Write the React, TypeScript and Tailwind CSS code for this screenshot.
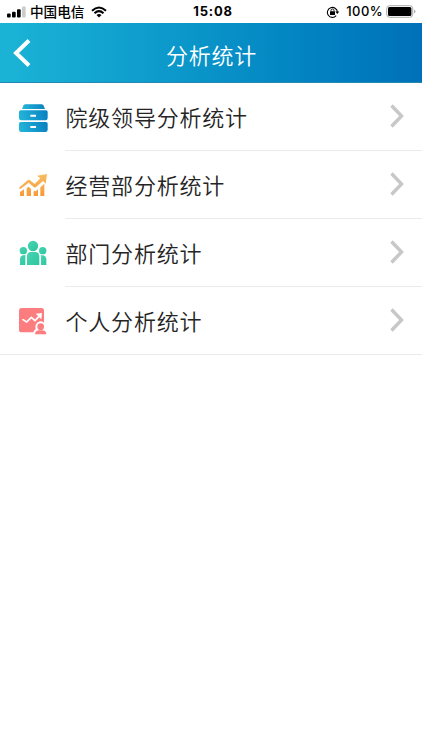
import type { ReactNode } from 'react';

const font = "font-['Noto_Sans_CJK_SC',sans-serif]";

function DrawerIcon() {
  return (
    <svg viewBox="0 -3 135 135" className="h-[45px] w-[45px]">
      <defs>
        <linearGradient id="drawer" x1="0" y1="0.1" x2="1" y2="0">
          <stop offset="0" stopColor="#22b3d8" />
          <stop offset="1" stopColor="#087fc1" />
        </linearGradient>
      </defs>
      <path d="M46 28H95Q98 28 100 31L105 42H36L41 31Q43 28 46 28Z" fill="url(#drawer)" />
      <path fillRule="evenodd" d="M32 46H108Q113 46 113 51V69Q113 76 106 76H34Q27 76 27 69V51Q27 46 32 46ZM61 59V65H78V59Z" fill="url(#drawer)" />
      <path fillRule="evenodd" d="M32 81H108Q113 81 113 86V104Q113 111 106 111H34Q27 111 27 104V86Q27 81 32 81ZM61 93V99H78V93Z" fill="url(#drawer)" />
    </svg>
  );
}

function GrowthIcon() {
  return (
    <svg viewBox="0 0 135 135" className="h-[45px] w-[45px]">
      <defs>
        <linearGradient id="growth" gradientUnits="userSpaceOnUse" x1="0" y1="35" x2="0" y2="103">
          <stop offset="0" stopColor="#f8bd62" />
          <stop offset="1" stopColor="#f79a35" />
        </linearGradient>
      </defs>
      <g fill="url(#growth)">
        <path d="M30 90L42 82V102H30ZM50 78L56 74L63 81V102H50ZM71 86L77 88L84 82V102H71ZM91 76L103 65V102H91Z" />
        <path d="M81 41L111 36L107 65L99 57L78 75Q75 78 71 75L56 62L32 80Q28 81 27 77L54 54Q57 52 60 55L74 66L91 49Z" />
      </g>
    </svg>
  );
}

function TeamIcon() {
  return (
    <svg viewBox="0 0 135 135" className="h-[45px] w-[45px]">
      <defs>
        <linearGradient id="team" x1="0" y1="0" x2="1" y2="1">
          <stop offset="0" stopColor="#49d4b1" />
          <stop offset="1" stopColor="#2cc6a0" />
        </linearGradient>
      </defs>
      <g fill="url(#team)">
        <circle cx="69" cy="48" r="15.5" />
        <path d="M60 66H78Q88 68 88 80V105H51V80Q51 68 60 66Z" />
        <circle cx="40" cy="62" r="11" />
        <path d="M38 76H47L46 81V105H30V86Q30 78 38 76Z" />
        <circle cx="98" cy="62" r="11" />
        <path d="M92 76H100Q108 78 109 86V105H93V81Z" />
      </g>
    </svg>
  );
}

function PersonalIcon() {
  return (
    <svg viewBox="0 0 135 135" className="h-[45px] w-[45px]">
      <rect x="27" y="30" width="75" height="73" rx="8" fill="#fb7d80" />
      <path d="M39 65L50 72L64 58L75 68L90 52" fill="none" stroke="white" strokeWidth="5" strokeLinecap="round" strokeLinejoin="round" />
      <path d="M77 47L96 45L94 64Z" fill="white" />
      <circle cx="92" cy="86" r="16" fill="white" />
      <path d="M70 112V106Q70 92 84 92H100Q115 93 115 106V112Z" fill="white" />
      <circle cx="92" cy="86" r="10" fill="#fb7d80" />
      <path d="M86 97H98Q109 99 109 109H75Q75 99 86 97Z" fill="#fb7d80" />
    </svg>
  );
}

function Row({ icon, label, last = false }: { icon: ReactNode; label: string; last?: boolean }) {
  return (
    <li className={`flex h-[68px] pl-[10px] ${last ? 'border-b border-[#ebebeb]' : ''}`}>
      <div className="w-[55px] shrink-0 pt-[11px]">{icon}</div>
      <div className={`flex flex-1 items-center justify-between pr-[18px] pb-[2px] ${last ? '' : 'border-b border-[#ebebeb]'}`}>
        <span className="ml-[0.5px] text-[22px] leading-[32px] font-[350] tracking-[0.8px] text-[#252525]">{label}</span>
        <svg viewBox="0 0 14 24" className="h-6 w-[14px]">
          <path d="M1.5 1.5L11.5 12L1.5 22.5" fill="none" stroke="#c8c8c8" strokeWidth="3.5" />
        </svg>
      </div>
    </li>
  );
}

export default function App() {
  return (
    <main className={`h-[750px] w-[422px] overflow-hidden bg-white ${font}`}>
      <div className="flex h-[23px] items-center pr-[6px] pl-[7px] text-black">
        <div className="flex w-[156px] items-center">
          <svg viewBox="0 0 19 12" className="h-3 w-[19px]">
            <rect x="0" y="7.5" width="3.7" height="4" rx="1" />
            <rect x="5" y="5.8" width="3.7" height="5.7" rx="1" />
            <rect x="10" y="3.2" width="3.7" height="8.3" rx="1" />
            <rect x="15" y="0.5" width="3.7" height="11" rx="1" fill="#ccc" />
          </svg>
          <span className="ml-[4px] text-[13.6px] leading-[23px] font-medium">中国电信</span>
          <svg viewBox="0 0 16 12" className="ml-[7px] h-3 w-4" fill="none" stroke="black" strokeWidth="2.1">
            <path d="M1 4.7Q8 -1.7 15 4.7M3.5 7.2Q8 3.2 12.5 7.2" />
            <path d="M5.5 9Q8 6.8 10.5 9L8 11.5Z" fill="black" stroke="none" />
          </svg>
        </div>
        <span className="w-[100px] pt-[1px] text-center font-['Inter',sans-serif] text-[13px] font-bold tracking-[0.8px]">15:08</span>
        <div className="flex flex-1 items-center justify-end">
          <svg viewBox="0 0 14 12" className="h-3 w-[14px]" fill="none" stroke="black">
            <path d="M10.2 9.7A5 5 0 1 1 11.4 6" strokeWidth="1.1" />
            <path d="M9.3 5.5H13.3L11.3 8Z" fill="black" stroke="none" />
            <rect x="4" y="5.2" width="5" height="3.8" rx="0.5" fill="black" stroke="none" />
            <path d="M5 5.5V4.5A1.5 1.5 0 0 1 8 4.5V5.5" strokeWidth="0.9" />
          </svg>
          <span className="ml-[6px] pt-[1px] font-['Inter',sans-serif] text-[13px] font-medium tracking-[0.4px]">100%</span>
          <svg viewBox="0 0 30 13" className="ml-[3px] h-[13px] w-[30px]">
            <rect x="0.7" y="0.7" width="26" height="11.6" rx="3" fill="white" stroke="#aaa" strokeWidth="1" />
            <rect x="2" y="2" width="23.4" height="9" rx="1.5" />
            <path d="M28.2 4.5Q30.6 6.5 28.2 8.5Z" fill="#999" />
          </svg>
        </div>
      </div>
      <header className="flex h-[60px] items-center border-b border-[#2788b4] bg-linear-to-r from-[#1bb4d6] to-[#0071b9] px-[13px]">
        <svg viewBox="0 0 18 28" className="h-7 w-[18px]">
          <path d="M16 1.5L3 14L16 26.5" fill="none" stroke="white" strokeWidth="4" />
        </svg>
        <h1 className="mt-[2px] flex-1 pr-[17px] text-center text-[22px] leading-[32px] font-[350] tracking-[0.8px] text-white">分析统计</h1>
      </header>
      <ul>
        <Row icon={<DrawerIcon />} label="院级领导分析统计" />
        <Row icon={<GrowthIcon />} label="经营部分析统计" />
        <Row icon={<TeamIcon />} label="部门分析统计" />
        <Row icon={<PersonalIcon />} label="个人分析统计" last />
      </ul>
    </main>
  );
}
